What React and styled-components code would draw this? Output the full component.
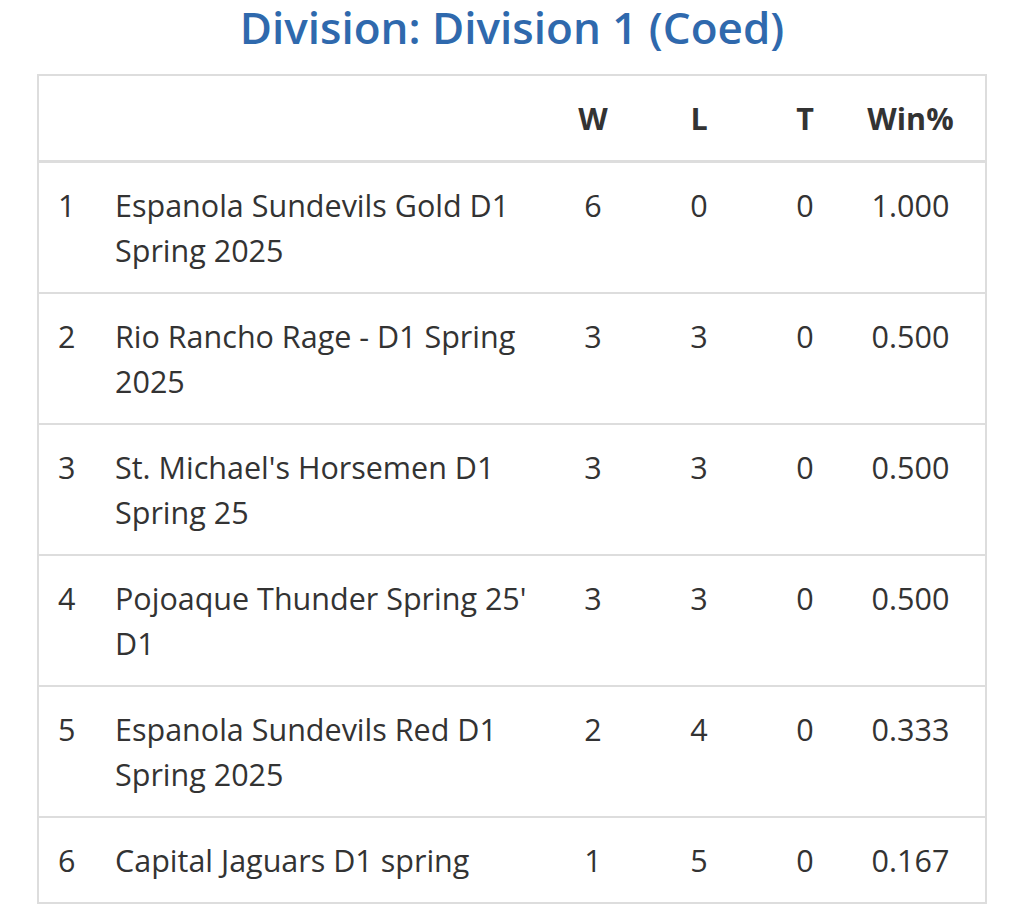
import React from "react";
import styled, { createGlobalStyle } from "styled-components";

const GlobalStyle = createGlobalStyle`
  html, body { margin: 0; padding: 0; background: #ffffff; }
  body { font-family: "Open Sans", "Liberation Sans", sans-serif; color: #333333; }
`;

const Page = styled.div`
  padding: 0 37px;
  display: flex;
  flex-direction: column;
  align-items: stretch;
`;

const Title = styled.h2`
  margin: 0;
  height: 74px;
  box-sizing: border-box;
  padding-top: 2px;
  text-align: center;
  font-family: "Open Sans", "Liberation Sans", sans-serif;
  font-weight: 600;
  font-size: 44px;
  line-height: 50px;
  color: #2f69ad;
`;

const Table = styled.table`
  width: 100%;
  border-collapse: collapse;
  table-layout: fixed;
  border: 2px solid #dddddd;
  font-size: 30.5px;
  line-height: 45px;
  color: #333333;
`;

const HeadCell = styled.th`
  font-weight: 700;
  height: 84px;
  padding: 0 ${(p) => (p.$last ? "22px" : "0")} 0 0;
  text-align: ${(p) => (p.$left ? "left" : "center")};
  border-bottom: 3px solid #dddddd;
  vertical-align: middle;
  color: #333333;
`;

const Row = styled.tr`
  border-top: 2px solid #dddddd;
`;

const Cell = styled.td`
  padding: 20px ${(p) => (p.$last ? "22px" : "0")} 19px ${(p) => (p.$pad ? "19px" : "0")};
  text-align: ${(p) => (p.$left ? "left" : "center")};
  vertical-align: top;
`;

const rows = [
  [1, "Espanola Sundevils Gold D1 Spring 2025", 6, 0, 0, "1.000"],
  [2, "Rio Rancho Rage - D1 Spring 2025", 3, 3, 0, "0.500"],
  [3, "St. Michael's Horsemen D1 Spring 25", 3, 3, 0, "0.500"],
  [4, "Pojoaque Thunder Spring 25' D1", 3, 3, 0, "0.500"],
  [5, "Espanola Sundevils Red D1 Spring 2025", 2, 4, 0, "0.333"],
  [6, "Capital Jaguars D1 spring", 1, 5, 0, "0.167"],
];

export default function App() {
  return (
    <>
      <GlobalStyle />
      <Page>
        <Title>Division: Division 1 (Coed)</Title>
        <Table>
          <colgroup>
            <col style={{ width: 58 }} />
            <col />
            <col style={{ width: 106 }} />
            <col style={{ width: 106 }} />
            <col style={{ width: 106 }} />
            <col style={{ width: 128 }} />
          </colgroup>
          <thead>
            <tr>
              <HeadCell $left />
              <HeadCell $left />
              <HeadCell>W</HeadCell>
              <HeadCell>L</HeadCell>
              <HeadCell>T</HeadCell>
              <HeadCell $last>Win%</HeadCell>
            </tr>
          </thead>
          <tbody>
            {rows.map((r) => (
              <Row key={r[0]}>
                <Cell $left $pad>{r[0]}</Cell>
                <Cell $left $pad>{r[1]}</Cell>
                <Cell>{r[2]}</Cell>
                <Cell>{r[3]}</Cell>
                <Cell>{r[4]}</Cell>
                <Cell $last>{r[5]}</Cell>
              </Row>
            ))}
          </tbody>
        </Table>
      </Page>
    </>
  );
}
